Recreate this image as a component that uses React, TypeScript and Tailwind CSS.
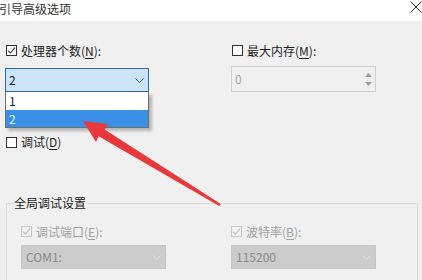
import React from "react";

function Check({ checked, disabled }: { checked?: boolean; disabled?: boolean }) {
  return (
    <span
      className={
        "flex h-[11px] w-[11px] shrink-0 items-center justify-center border " +
        (disabled ? "border-[#c9c9c9] bg-[#f3f3f3]" : "border-[#333333] bg-white")
      }
    >
      {checked && (
        <svg width="9" height="9" viewBox="0 0 9 9">
          <path
            d="M1 4.6 L3.4 7 L8 1.6"
            fill="none"
            stroke={disabled ? "#bdbdbd" : "#333333"}
            strokeWidth="1.1"
          />
        </svg>
      )}
    </span>
  );
}

function Chevron({ color }: { color: string }) {
  return (
    <svg width="9" height="5" viewBox="0 0 9 5">
      <path d="M0.5 0.5 L4.5 4.5 L8.5 0.5" fill="none" stroke={color} strokeWidth="1" />
    </svg>
  );
}

function Label({
  text,
  mn,
  after,
  disabled,
}: {
  text: string;
  mn: string;
  after: string;
  disabled?: boolean;
}) {
  return (
    <span className={disabled ? "text-[#a0a0a0]" : "text-[#1c1c1c]"}>
      {text}(<span className="underline underline-offset-2">{mn}</span>){after}
    </span>
  );
}

export default function App() {
  return (
    <div className="relative h-[280px] w-[422px] overflow-hidden bg-[#f0f0f0] font-['Noto_Sans_CJK_SC',sans-serif] text-[12px] leading-[16px] text-[#1c1c1c]">
      {/* title bar */}
      <div className="flex h-[22px] items-start justify-between border-b border-[#ececec] bg-white">
        <span className="-ml-[1px] pt-[1px] text-[#333333]">引导高级选项</span>
        <svg width="12" height="12" viewBox="0 0 12 12" className="mr-[0px] mt-[1px]">
          <path d="M0.5 0.5 L11.5 11.5 M11.5 0.5 L0.5 11.5" stroke="#333333" strokeWidth="1" />
        </svg>
      </div>

      {/* top options */}
      <div className="flex pl-[5px] pt-[20px]">
        <div className="flex w-[226px] flex-col">
          <div className="flex h-[17px] items-center gap-[4px] pl-[1px]">
            <Check checked />
            <Label text="处理器个数" mn="N" after=":" />
          </div>
          <div className="relative mt-[9px] w-[144px]">
            <div className="flex h-[24px] items-center justify-between border border-[#2f6a96] bg-[#cce4f7] pl-[3px] pr-[4px]">
              <span>2</span>
              <Chevron color="#4a4a4a" />
            </div>
            <div className="absolute left-0 top-full z-10 w-[144px] border border-t-0 border-[#6e6e6e] bg-white shadow-[3px_3px_3px_rgba(0,0,0,0.25)]">
              <div className="flex h-[18px] items-center pl-[3px]">1</div>
              <div className="flex h-[17px] items-center bg-[#3a8fe6] pl-[3px] text-[#e8f6ff]">2</div>
            </div>
          </div>
          <div className="mt-[42px] flex h-[16px] items-center gap-[4px] pl-[1px]">
            <Check />
            <Label text="调试" mn="D" after="" />
          </div>
        </div>

        <div className="flex flex-col">
          <div className="flex h-[17px] items-center gap-[4px] pl-[1px]">
            <Check />
            <Label text="最大内存" mn="M" after=":" />
          </div>
          <div className="mt-[7px] flex h-[26px] w-[145px] items-center justify-between border border-[#cfcfcf] bg-[#f0f0f0] pl-[3px] pr-[2px]">
            <span className="text-[#a6a6a6]">0</span>
            <div className="flex flex-col items-center gap-[5px] pr-[1px]">
              <svg width="7" height="4" viewBox="0 0 7 4">
                <path d="M0 4 L3.5 0 L7 4 Z" fill="#9c9c9c" />
              </svg>
              <svg width="7" height="4" viewBox="0 0 7 4">
                <path d="M0 0 L3.5 4 L7 0 Z" fill="#9c9c9c" />
              </svg>
            </div>
          </div>
        </div>
      </div>

      {/* group box */}
      <fieldset className="ml-[6px] mt-[45px] h-[100px] w-[412px] border border-[#dcdcdc] p-0">
        <legend className="ml-[6px] px-[1px] text-[#1c1c1c]">全局调试设置</legend>
        <div className="flex pl-[14px] pt-[12px]">
          <div className="flex w-[210px] flex-col">
            <div className="flex h-[17px] items-center gap-[4px]">
              <Check checked disabled />
              <Label text="调试端口" mn="E" after=":" disabled />
            </div>
            <div className="mt-[5px] flex h-[24px] w-[145px] items-center justify-between border border-[#c6c6c6] bg-[#cccccc] pl-[4px] pr-[4px] text-[#8a8a8a]">
              <span>COM1:</span>
              <Chevron color="#e2e2e2" />
            </div>
          </div>
          <div className="flex flex-col">
            <div className="flex h-[17px] items-center gap-[4px]">
              <Check checked disabled />
              <Label text="波特率" mn="B" after=":" disabled />
            </div>
            <div className="mt-[5px] flex h-[24px] w-[145px] items-center justify-between border border-[#c6c6c6] bg-[#cccccc] pl-[4px] pr-[4px] text-[#8a8a8a]">
              <span>115200</span>
              <Chevron color="#e2e2e2" />
            </div>
          </div>
        </div>
      </fieldset>

      {/* red annotation arrow */}
      <svg
        className="pointer-events-none absolute left-0 top-0 z-20"
        width="422"
        height="280"
        viewBox="0 0 422 280"
      >
        <polygon
          points="83,121 108,124 104.6,129.6 220.8,204 219.2,206 98.6,136.2 96,142"
          fill="#e8383b"
        />
      </svg>
    </div>
  );
}
